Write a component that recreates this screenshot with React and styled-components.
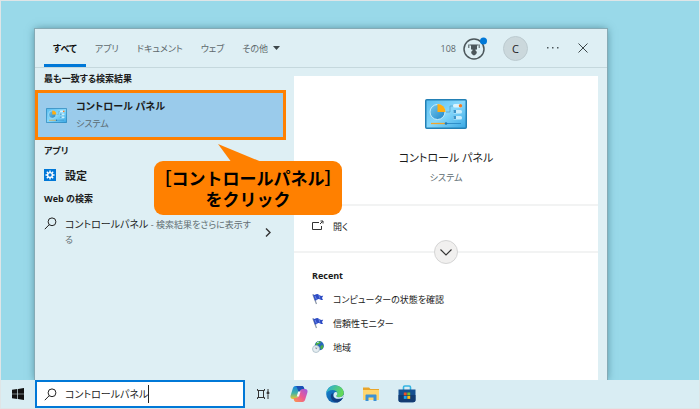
import React from 'react';
import styled, { createGlobalStyle } from 'styled-components';

const GlobalStyle = createGlobalStyle`
    * {
        box-sizing: border-box;
    }

    body {
        margin: 0;
        font-family: 'Open Sans', 'Noto Sans CJK JP', sans-serif;
        font-size: 10px;
        line-height: 15px;
        color: #1b1b1b;
        font-feature-settings: 'palt';
    }

    button, input {
        font: inherit;
        font-feature-settings: inherit;
        color: inherit;
        margin: 0;
        padding: 0;
        border: 0;
        background: none;
    }

    h1, h2, p, ul {
        margin: 0;
        padding: 0;
        list-style: none;
    }

    svg {
        display: block;
        flex: none;
    }
`;

const Screen = styled.div`
    display: flex;
    flex-direction: column;
    min-height: 100vh;
    border: 1px solid #dfe5e7;
    background: #99d9e9;
`;

const Desktop = styled.main`
    flex: 1;
    display: flex;
    padding: 28px 92px 0 34px;
    overflow: hidden;
`;

const Panel = styled.section`
    flex: 1;
    min-width: 0;
    display: flex;
    flex-direction: column;
    background: #deeff4;
    box-shadow: 0 0 0 1px #85aab5, 0 0 8px rgba(30, 80, 95, 0.6);
`;

const Header = styled.header`
    display: flex;
    justify-content: space-between;
    height: 39px;
    padding: 0 9px;
    border-bottom: 1px solid #c5d8dd;
`;

const Tabs = styled.nav`
    display: flex;
`;

const Tab = styled.button`
    display: flex;
    align-items: center;
    gap: 5px;
    padding: 3px 9px 0;
    font-size: 9px;
    font-weight: ${props => props.$active ? 700 : 400};
    color: ${props => props.$active ? '#111' : '#5d686c'};
    border-bottom: 3px solid ${props => props.$active ? '#0078d7' : 'transparent'};
`;

const Tools = styled.div`
    display: flex;
    align-items: center;
    color: #5d686c;
`;

const Rewards = styled.button`
    display: flex;
    align-items: center;
    gap: 7px;
    font-size: 9px;
`;

const Avatar = styled.button`
    width: 25px;
    height: 25px;
    margin: 0 10px 0 16px;
    border: 1px solid #bccbd0;
    border-radius: 50%;
    background: #cbd8dc;
    color: #222;
    font-size: 11px;
`;

const IconButton = styled.button`
    display: flex;
    align-items: center;
    justify-content: center;
    width: ${props => props.$width}px;
    align-self: stretch;
`;

const Body = styled.div`
    flex: 1;
    display: grid;
    grid-template-columns: 259px 1fr;
`;

const Results = styled.div`
    position: relative;
    z-index: 1;
`;

const GroupTitle = styled.h2`
    padding: 0 9px;
    font-size: 9px;
    font-weight: 700;
    line-height: 22px;
`;

const BestMatch = styled.button`
    display: flex;
    align-items: center;
    gap: 9px;
    width: calc(100% - 8px);
    height: 50px;
    padding: 0 8px;
    border: 3px solid #ff8000;
    background: #9acbeb;
    text-align: left;
    line-height: 18px;
`;

const ResultName = styled.span`
    display: block;
    font-size: ${props => props.$size || 10}px;
    font-weight: 700;
`;

const Kind = styled.span`
    display: block;
    font-size: 9px;
    color: #5b6a70;
`;

const AppResult = styled.button`
    display: flex;
    align-items: center;
    gap: 9px;
    width: 100%;
    height: 26px;
    padding: 0 9px;
`;

const WebResult = styled.a`
    display: flex;
    align-items: flex-start;
    gap: 8px;
    padding: 7px 23px 7px 9px;
    color: #1b1b1b;
    text-decoration: none;

    p {
        flex: 1;
        min-width: 0;
        padding-right: 5px;
    }

    small {
        font-size: 9px;
        color: #626e72;
    }

    svg:last-child {
        align-self: center;
    }
`;

const Callout = styled.div`
    position: absolute;
    left: 119px;
    top: 93px;
    width: 188px;
    padding: 6px 0;
    border-radius: 9px;
    background: #ff8000;
    color: #000;
    font-family: 'Noto Sans CJK JP', sans-serif;
    font-feature-settings: normal;
    font-size: 17px;
    font-weight: 700;
    line-height: 21px;
    text-align: center;
    white-space: nowrap;

    svg {
        position: absolute;
        left: 64px;
        top: -17px;
    }
`;

const Detail = styled.article`
    margin: 8px 9px 0 0;
    background: #fff;
`;

const Hero = styled.div`
    display: flex;
    flex-direction: column;
    align-items: center;
    height: 128px;
    padding-top: 23px;

    h1 {
        margin-top: 17px;
        font-size: 11px;
        font-weight: 400;
        line-height: 24px;
    }
`;

const Actions = styled.div`
    position: relative;
    height: 49px;
    padding: 8px 18px;
    border-top: 2px solid #f2f3f3;
    border-bottom: 2px solid #f2f3f3;
`;

const Entry = styled.button`
    display: flex;
    align-items: center;
    gap: 9px;
    height: 24px;
    font-size: 9px;
`;

const Expand = styled.button`
    position: absolute;
    left: 50%;
    bottom: -13px;
    display: flex;
    align-items: center;
    justify-content: center;
    width: 24px;
    height: 24px;
    margin-left: -12px;
    border: 1px solid #d5d5d5;
    border-radius: 50%;
    background: #f1f0ef;
`;

const Recent = styled.div`
    padding: 12px 18px;

    h2 {
        font-size: 9px;
        font-weight: 700;
        line-height: 22px;
    }
`;

const Taskbar = styled.footer`
    display: flex;
    height: 28px;
    background: #d9edf3;
`;

const SearchBox = styled.label`
    display: flex;
    align-items: center;
    width: 210px;
    padding-left: 7px;
    border: 2px solid #0078d7;
    background: #fff;

    input {
        field-sizing: content;
        min-width: 10px;
        margin-left: 8px;
        outline: 0;
    }
`;

const Caret = styled.span`
    width: 1px;
    height: 18px;
    background: #222;
`;

const PanelIcon = ({ width, height }) => (
    <svg width={width} height={height} viewBox="0 0 42 30">
        <defs>
            <linearGradient id="cp" x1="0" y1="0" x2="1" y2="1">
                <stop offset="0" stopColor="#58bdf0" />
                <stop offset=".5" stopColor="#87d8fb" />
                <stop offset="1" stopColor="#37a7e4" />
            </linearGradient>
            <linearGradient id="pie" x1="0" y1="0" x2="1" y2="1">
                <stop offset="0" stopColor="#77c9ee" />
                <stop offset="1" stopColor="#1f86c8" />
            </linearGradient>
        </defs>
        <rect x=".75" y=".75" width="40.5" height="28.5" rx="1" fill="url(#cp)" stroke="#2380b5" strokeWidth="1.5" />
        <circle cx="12.500" cy="13" r="7.500" fill="url(#pie)" stroke="#c9edfc" />
        <path d="M12.500 13V5a8 8 0 0 1 8 8z" fill="#ffae12" />
        <path d="M21 13h4V7h4" fill="none" stroke="#5aa3c8" strokeWidth=".8" />
        <rect x="28" y="5" width="9" height="3.500" rx="1.500" fill="#d9f3fd" />
        <rect x="28" y="11" width="9" height="3.500" rx="1.500" fill="#c8edfc" />
        <rect x="28" y="17" width="9" height="3.500" rx="1.500" fill="#c8edfc" />
        <circle cx="35.500" cy="6.700" r="1.700" fill="#f27b21" />
        <path d="M28.500 11h2.500v3h-2.500zM28.500 17h2.500v3h-2.500z" fill="#3b94c9" />
        <path d="M6 24.500h15" stroke="#f0a52d" strokeWidth="1.300" />
        <path d="M21 24.500h15" stroke="#2f8fc9" strokeWidth="1" />
        <circle cx="21" cy="24.500" r="1.300" fill="#1f7ab5" />
    </svg>
);

const SettingsIcon = () => (
    <svg width="12" height="12" viewBox="0 0 12 12">
        <path d="M0 0h12v12H0z" fill="#0078d7" />
        <circle cx="6" cy="6" r="2.400" fill="none" stroke="#fff" strokeWidth="1.400" />
        <path d="M6 1.500v1.700M6 8.800v1.700M1.500 6h1.700M8.800 6h1.700M2.800 2.800 4 4M8 8l1.200 1.200M9.200 2.800 8 4M4 8 2.800 9.200" stroke="#fff" strokeWidth="1.400" />
    </svg>
);

const SearchIcon = () => (
    <svg width="13" height="13" viewBox="0 0 13 13" fill="none" stroke="#222" strokeWidth="1">
        <circle cx="8" cy="4.800" r="3.900" />
        <path d="M5.200 7.700.8 12.200" />
    </svg>
);

const FlagIcon = () => (
    <svg width="12" height="12" viewBox="0 0 12 12">
        <path d="M.8 1.200 4.500 11" stroke="#8b96a5" strokeWidth="1.200" />
        <path d="M1 1.500C3 3 4 0 6 1.300c1.500 1 2.500 2 5.200 1.500L10 5l1 2c-2.500.6-3-1.400-4.500-1-1.300.3-2 2-3.700 1.200z" fill="#2e4cc4" />
        <path d="m3 3 1.500 3.500M7 2l.8 3.500" stroke="#7d98ed" strokeWidth=".8" />
    </svg>
);

const GlobeIcon = () => (
    <svg width="12" height="12" viewBox="0 0 12 12">
        <circle cx="7.300" cy="4.700" r="4.600" fill="#2767bd" />
        <path d="M4 2c1.500-2 4-2 5-1L7.500 3 6 3.200 5 5 3.500 4zM8.500 5l2-1 1 1.500-1.500 3-1.500-1z" fill="#4bae43" />
        <path d="M5 1.500 7 1" stroke="#bfe6ff" />
        <circle cx="4" cy="8" r="3.500" fill="#e5edf1" stroke="#a9bcc7" strokeWidth=".8" />
        <path d="M4 6v2l1.400-1" stroke="#557" strokeWidth=".5" fill="none" />
    </svg>
);

const TrophyIcon = () => (
    <svg width="24" height="24" viewBox="0 0 24 24">
        <circle cx="11" cy="13" r="10" fill="none" stroke="#4c575b" strokeWidth="1.500" />
        <path d="M8 8.500h6v5h-1.500v1a2.600 2.600 0 1 1-3 0v-1H8z" fill="#4c575b" />
        <path d="M5.800 8.500v3.500M16.200 8.500v3.500M6.500 9H8M14 9h1.500" stroke="#4c575b" />
        <circle cx="20.500" cy="5" r="3.500" fill="#0078d7" />
    </svg>
);

const WindowsIcon = () => (
    <svg width="12" height="12" viewBox="0 0 12 12">
        <path d="M0 1.700 5.300 1v4.700H0zM6 .9 12 0v5.700H6zM0 6.300h5.300V11L0 10.300zM6 6.300h6V12l-6-.9z" fill="#111" />
    </svg>
);

const TaskViewIcon = () => (
    <svg width="14" height="14" viewBox="0 0 14 14" fill="none" stroke="#333" strokeWidth="1">
        <path d="M1.500 2v1.500h7V2M1.500 12v-1.500h7V12M2.500 3.500v7M7.500 3.500v7M12 2v3M12 8v4" />
        <path d="M11.200 5h1.600v2h-1.600z" fill="#333" />
    </svg>
);

const CopilotIcon = () => (
    <svg width="18" height="18" viewBox="0 0 18 18">
        <defs>
            <linearGradient id="co1" x1="0" y1="0" x2="0" y2="1">
                <stop offset="0" stopColor="#1784e0" />
                <stop offset=".55" stopColor="#42b3a5" />
                <stop offset="1" stopColor="#efcb2e" />
            </linearGradient>
            <linearGradient id="co2" x1="1" y1="0" x2="0" y2="1">
                <stop offset="0" stopColor="#9a5be5" />
                <stop offset=".5" stopColor="#ed5a92" />
                <stop offset="1" stopColor="#fb9a49" />
            </linearGradient>
        </defs>
        <path d="M5.500 1H12c1.300 0 1.800 1 2.200 2.500L14.500 5H12c-1.400 0-2 .7-2.400 2L8 12c-.4 1.200-1 2-2.500 2H3c-2 0-3-1.500-2.400-3.500l2.200-7C3.300 2 4 1 5.500 1z" fill="url(#co1)" />
        <path d="M12.500 17H6c-1.300 0-1.800-1-2.200-2.500L3.500 13H6c1.400 0 2-.7 2.400-2L10 6c.4-1.200 1-2 2.500-2H15c2 0 3 1.500 2.400 3.500l-2.200 7c-.5 1.500-1.200 2.500-2.700 2.500z" fill="url(#co2)" />
        <path d="M5.500 1H12c1.300 0 1.800 1 2.200 2.500L14.400 4h-2c-1.400 0-2.100.8-2.500 2L9 8.500 7.500 4C7 2.500 6.600 1.200 5.500 1z" fill="#1b4fb5" />
        <path d="M8.200 6.500h2.300L9 11.500H6.700z" fill="#f6f4f7" />
    </svg>
);

const EdgeIcon = () => (
    <svg width="18" height="18" viewBox="0 0 18 18">
        <defs>
            <linearGradient id="ed1" x1="0" y1="0" x2="1" y2=".3">
                <stop offset="0" stopColor="#24a9df" />
                <stop offset="1" stopColor="#65d957" />
            </linearGradient>
            <linearGradient id="ed2" x1="0" y1="0" x2="1" y2="1">
                <stop offset="0" stopColor="#1689d6" />
                <stop offset="1" stopColor="#114a91" />
            </linearGradient>
        </defs>
        <circle cx="9" cy="9" r="8.800" fill="url(#ed2)" />
        <path d="M.3 8.200C1 3.500 4.600.2 9 .2c5.200 0 8.800 3.900 8.800 7.800 0 2.700-2.200 4.200-4.500 4.200-2 0-3-.7-3-1.300 0-.5 1-.8 1-2.400C11.300 6.500 9.300 5 6.500 5 3.500 5 1.200 6.500.3 8.200z" fill="url(#ed1)" />
        <path d="M7.300 8C6 10 7.500 14 12 14c1.700 0 3.200-.6 4.400-1.300.4-.2.7.1.4.5-1.200 1.800-3 3.500-5.600 4.200C7 17 4.800 14 4.800 11.300 4.800 9.600 5.800 8.300 7.300 8z" fill="#123e83" />
        <path d="M11.300 8.500c0 1.600-1 1.900-1 2.400 0 .6 1 1.300 3 1.300 1.600 0 3.300-.7 4.100-2.200l.6.500-1.300 2.200c-1.400.8-3 1.300-4.700 1.100C8.500 13.500 7.500 12 7.500 10.200c0-1.600 1-3.200 2.100-3.200 1 0 1.700.6 1.700 1.500z" fill="#d9edf3" />
    </svg>
);

const ExplorerIcon = () => (
    <svg width="18" height="18" viewBox="0 0 18 18">
        <path d="M1 2.500h6L8.500 4H17v5H1z" fill="#e9a52b" />
        <path d="M1 5h16v10H1z" fill="#ffd66e" />
        <path d="M3.500 16v-5.500c0-.6.4-1 1-1h9c.6 0 1 .4 1 1V16h-3v-3.500h-5V16z" fill="#3d92d4" />
    </svg>
);

const StoreIcon = () => (
    <svg width="18" height="18" viewBox="0 0 18 18">
        <path d="M5.500 5V2.300C5.500 1.500 6 1 6.800 1h4.400c.8 0 1.300.5 1.300 1.300V5" fill="none" stroke="#33b4e3" strokeWidth="1.600" />
        <path d="M.5 4.500h17V15c0 1.300-1 2.300-2.300 2.300H2.800C1.500 17.300.5 16.300.5 15z" fill="#155091" />
        <path d="M.5 10h17v5c0 1.300-1 2.300-2.300 2.300H2.800C1.500 17.300.5 16.300.5 15z" fill="#123c72" />
        <path d="M5.800 7.500h2.900v2.900H5.800z" fill="#f15125" />
        <path d="M9.300 7.500h2.900v2.900H9.300z" fill="#80bd28" />
        <path d="M5.800 11h2.900v2.900H5.800z" fill="#20a4ed" />
        <path d="M9.300 11h2.900v2.900H9.300z" fill="#ffbc16" />
    </svg>
);

const tabs = ['すべて', 'アプリ', 'ドキュメント', 'ウェブ', 'その他'];

const recent = [
    { name: 'コンピューターの状態を確認', icon: <FlagIcon /> },
    { name: '信頼性モニター', icon: <FlagIcon /> },
    { name: '地域', icon: <GlobeIcon /> },
];

const pinned = [
    { name: 'タスク ビュー', icon: <TaskViewIcon /> },
    { name: 'Copilot', icon: <CopilotIcon /> },
    { name: 'Microsoft Edge', icon: <EdgeIcon /> },
    { name: 'エクスプローラー', icon: <ExplorerIcon /> },
    { name: 'Microsoft Store', icon: <StoreIcon /> },
];

const App = () => (
    <Screen>
        <GlobalStyle />
        <Desktop>
            <Panel>
                <Header>
                    <Tabs>
                        {tabs.map((tab, i) => (
                            <Tab key={tab} $active={i === 0}>
                                {tab}
                                {i === tabs.length - 1 && (
                                    <svg width="7" height="4" viewBox="0 0 7 4"><path d="M0 0h7L3.500 4z" fill="#3d474a" /></svg>
                                )}
                            </Tab>
                        ))}
                    </Tabs>
                    <Tools>
                        <Rewards>108 <TrophyIcon /></Rewards>
                        <Avatar>C</Avatar>
                        <IconButton $width={30} aria-label="オプション">
                            <svg width="12" height="2" viewBox="0 0 12 2"><path d="M0 0h1.500v1.500H0zM5 0h1.500v1.500H5zM10 0h1.500v1.500H10z" fill="#4c575b" /></svg>
                        </IconButton>
                        <IconButton $width={30} aria-label="閉じる">
                            <svg width="10" height="10" viewBox="0 0 10 10"><path d="m.5.500 9 9m0-9-9 9" stroke="#3d474a" strokeWidth="1" /></svg>
                        </IconButton>
                    </Tools>
                </Header>
                <Body>
                    <Results>
                        <GroupTitle>最も一致する検索結果</GroupTitle>
                        <BestMatch>
                            <PanelIcon width={21} height={15} />
                            <span>
                                <ResultName>コントロール パネル</ResultName>
                                <Kind>システム</Kind>
                            </span>
                        </BestMatch>
                        <GroupTitle>アプリ</GroupTitle>
                        <AppResult>
                            <SettingsIcon />
                            <ResultName $size={11}>設定</ResultName>
                        </AppResult>
                        <GroupTitle>Web の検索</GroupTitle>
                        <WebResult href="#web">
                            <SearchIcon />
                            <p>コントロールパネル<small> - 検索結果をさらに表示する</small></p>
                            <svg width="6" height="9" viewBox="0 0 6 9"><path d="m1 .5 4 4-4 4" fill="none" stroke="#333" strokeWidth="1.400" /></svg>
                        </WebResult>
                        <Callout>
                            <svg width="48" height="20" viewBox="0 0 48 20"><path d="M0 0 46 19H14z" fill="#ff8000" /></svg>
                            ［コントロールパネル］<br />をクリック
                        </Callout>
                    </Results>
                    <Detail>
                        <Hero>
                            <PanelIcon width={42} height={30} />
                            <h1>コントロール パネル</h1>
                            <Kind>システム</Kind>
                        </Hero>
                        <Actions>
                            <Entry>
                                <svg width="12" height="12" viewBox="0 0 12 12" fill="none" stroke="#333"><path d="M7 2.500H.5v7h9V6M8 4l2.500-2.500M8.500 1H11v2.500" /></svg>
                                開く
                            </Entry>
                            <Expand aria-label="展開">
                                <svg width="12" height="7" viewBox="0 0 12 7"><path d="m.5.500 5.500 5.500L11.500.5" fill="none" stroke="#333" strokeWidth="1.100" /></svg>
                            </Expand>
                        </Actions>
                        <Recent>
                            <h2>Recent</h2>
                            <ul>
                                {recent.map(item => (
                                    <li key={item.name}>
                                        <Entry>{item.icon}{item.name}</Entry>
                                    </li>
                                ))}
                            </ul>
                        </Recent>
                    </Detail>
                </Body>
            </Panel>
        </Desktop>
        <Taskbar>
            <IconButton $width={34} aria-label="スタート"><WindowsIcon /></IconButton>
            <SearchBox>
                <SearchIcon />
                <input type="text" aria-label="検索" defaultValue="コントロールパネル" />
                <Caret />
            </SearchBox>
            {pinned.map(app => (
                <IconButton key={app.name} $width={36} aria-label={app.name}>{app.icon}</IconButton>
            ))}
        </Taskbar>
    </Screen>
);

export default App;
